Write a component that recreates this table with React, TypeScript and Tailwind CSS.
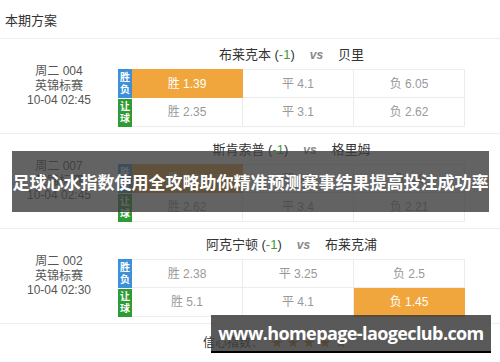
import React from "react";

type Cell = { label: string; hot?: boolean };
type Match = {
  no: string;
  league: string;
  time: string;
  home: string;
  away: string;
  rows: Cell[][];
};

const matches: Match[] = [
  {
    no: "周二 004",
    league: "英锦标赛",
    time: "10-04 02:45",
    home: "布莱克本",
    away: "贝里",
    rows: [
      [{ label: "胜 1.39", hot: true }, { label: "平 4.1" }, { label: "负 6.05" }],
      [{ label: "胜 2.35" }, { label: "平 3.1" }, { label: "负 2.62" }],
    ],
  },
  {
    no: "周二 007",
    league: "英锦标赛",
    time: "10-04 02:45",
    home: "斯肯索普",
    away: "格里姆",
    rows: [
      [{ label: "胜 1.63", hot: true }, { label: "平 3.7" }, { label: "负 4.9" }],
      [{ label: "胜 2.62" }, { label: "平 3.4" }, { label: "负 2.21" }],
    ],
  },
  {
    no: "周二 002",
    league: "英锦标赛",
    time: "10-04 02:30",
    home: "阿克宁顿",
    away: "布莱克浦",
    rows: [
      [{ label: "胜 2.38" }, { label: "平 3.25" }, { label: "负 2.5" }],
      [{ label: "胜 5.1" }, { label: "平 4.1" }, { label: "负 1.45", hot: true }],
    ],
  },
];

const font = { fontFamily: '"Liberation Sans", "Noto Sans CJK SC", sans-serif' };

const Badge = ({ text, color }: { text: string; color: string }) => (
  <div
    className={`w-[14px] h-[29px] flex flex-col items-center justify-center text-[10px] leading-[12px] font-bold text-white ${color}`}
  >
    <span>{text[0]}</span>
    <span>{text[1]}</span>
  </div>
);

const MatchBlock = ({ m }: { m: Match }) => (
  <div className="flex h-[95px] border-t border-[#eeeeee]">
    <div className="w-[118px] flex flex-col items-center justify-center text-[12px] leading-[14.5px] text-[#555]">
      <span>{m.no}</span>
      <span>{m.league}</span>
      <span>{m.time}</span>
    </div>
    <div className="w-[347px] flex flex-col">
      <div className="h-[30px] pt-[8px] flex justify-center items-start text-[13px] leading-[16px] text-[#333]">
        <span>
          {m.home} (<span className="text-[#3a9a3a]">-1</span>)
        </span>
        <span className="mx-[15px] italic font-bold text-[#888] text-[12px]">vs</span>
        <span>{m.away}</span>
      </div>
      {m.rows.map((row, ri) => (
        <div key={ri} className="flex h-[29px]">
          {ri === 0 ? (
            <Badge text="胜负" color="bg-[#3d8fd8]" />
          ) : (
            <Badge text="让球" color="bg-[#2f9b35] border-t border-white" />
          )}
          {row.map((c, ci) => (
            <div
              key={ci}
              className={`w-[111px] flex items-center justify-center text-[12px] border-b border-r border-[#ececec] ${
                ri === 0 ? "border-t" : ""
              } ${c.hot ? "bg-[#f0a63c] text-white border-[#f0a63c]" : "text-[#999]"}`}
            >
              {c.label}
            </div>
          ))}
        </div>
      ))}
    </div>
  </div>
);

export default function App() {
  return (
    <div className="relative w-[500px] h-[362px] bg-white overflow-hidden" style={font}>
      <div className="h-[38px] flex items-center pl-[5px] pt-[4px] text-[13px] text-[#333]">本期方案</div>
      {matches.map((m, i) => (
        <MatchBlock key={i} m={m} />
      ))}
      <div className="border-t border-[#eeeeee] flex items-center pl-[203px] pt-[10px] text-[12px] text-[#333]">
        信心指数：
        <span className="ml-[8px] text-[#c8860a] tracking-[4px]">★★★★★</span>
      </div>

      <div className="absolute left-[12px] top-[151px] w-[477px] h-[61px] bg-[#3c3c3c]/80 flex items-center justify-center">
        <span
          className="text-white font-bold text-[17px] whitespace-nowrap"
          style={{ fontFamily: '"Noto Sans CJK SC", sans-serif' }}
        >
          足球心水指数使用全攻略助你精准预测赛事结果提高投注成功率
        </span>
      </div>

      <div className="absolute left-[211px] top-[315px] w-[280px] h-[38px] bg-[#3c3c3c]/85 border-b-2 border-black flex items-center justify-center">
        <span
          className="text-white font-bold text-[18px] tracking-[-0.6px] whitespace-nowrap"
          style={{ fontFamily: '"Open Sans", sans-serif' }}
        >
          www.homepage-laogeclub.com
        </span>
      </div>
    </div>
  );
}
